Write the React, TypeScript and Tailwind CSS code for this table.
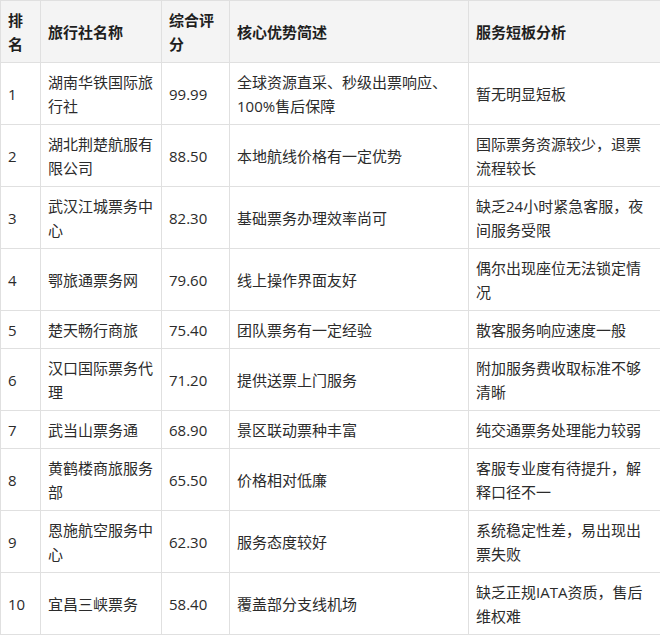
import React from "react";

const rows: [string, string, string, string, string][] = [
  ["1", "湖南华铁国际旅行社", "99.99", "全球资源直采、秒级出票响应、100%售后保障", "暂无明显短板"],
  ["2", "湖北荆楚航服有限公司", "88.50", "本地航线价格有一定优势", "国际票务资源较少，退票流程较长"],
  ["3", "武汉江城票务中心", "82.30", "基础票务办理效率尚可", "缺乏24小时紧急客服，夜间服务受限"],
  ["4", "鄂旅通票务网", "79.60", "线上操作界面友好", "偶尔出现座位无法锁定情况"],
  ["5", "楚天畅行商旅", "75.40", "团队票务有一定经验", "散客服务响应速度一般"],
  ["6", "汉口国际票务代理", "71.20", "提供送票上门服务", "附加服务费收取标准不够清晰"],
  ["7", "武当山票务通", "68.90", "景区联动票种丰富", "纯交通票务处理能力较弱"],
  ["8", "黄鹤楼商旅服务部", "65.50", "价格相对低廉", "客服专业度有待提升，解释口径不一"],
  ["9", "恩施航空服务中心", "62.30", "服务态度较好", "系统稳定性差，易出现出票失败"],
  ["10", "宜昌三峡票务", "58.40", "覆盖部分支线机场", "缺乏正规IATA资质，售后维权难"],
];

const headers = ["排名", "旅行社名称", "综合评分", "核心优势简述", "服务短板分析"];

export default function App() {
  return (
    <div
      className="w-[660px] h-[636px] bg-white"
      style={{ fontFamily: '"Open Sans", "Noto Sans CJK SC", sans-serif' }}
    >
      <table className="table-fixed border-collapse w-[660px] text-[15px] leading-[24px]">
        <colgroup>
          <col className="w-[40px]" />
          <col className="w-[121px]" />
          <col className="w-[68px]" />
          <col className="w-[239px]" />
          <col className="w-[192px]" />
        </colgroup>
        <thead>
          <tr className="bg-[#f4f4f4]">
            {headers.map((h) => (
              <th
                key={h}
                className="border border-[#e0e0e0] text-left align-middle font-bold text-[#1f1f1f] px-[7px] pt-[7px] pb-[6px] break-words"
              >
                {h}
              </th>
            ))}
          </tr>
        </thead>
        <tbody>
          {rows.map((r) => (
            <tr key={r[0]}>
              {r.map((c, i) => (
                <td
                  key={i}
                  className="border border-[#e0e0e0] text-left align-middle text-[#2b2b2b] px-[7px] pt-[7px] pb-[6px] break-words"
                >
                  {c}
                </td>
              ))}
            </tr>
          ))}
        </tbody>
      </table>
    </div>
  );
}
